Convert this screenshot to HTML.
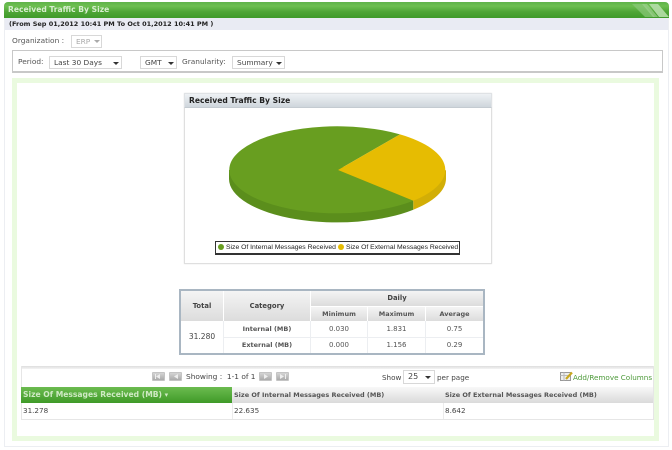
<!DOCTYPE html>
<html>
<head>
<meta charset="utf-8">
<style>
html,body{margin:0;padding:0;background:#fff;}
#p{position:relative;width:672px;height:450px;overflow:hidden;background:#fff;font-family:"DejaVu Sans","Liberation Sans",sans-serif;color:#444;filter:blur(.3px);}
#p div{position:absolute;box-sizing:border-box;}
.t{white-space:nowrap;line-height:12px;}
.c{text-align:center;}
.sel{background:#fff;border:1px solid #d8d8d8;height:13px;font-size:7.4px;line-height:11px;padding-left:4px;color:#444;white-space:nowrap;}
.arr{width:0;height:0;border-left:3px solid transparent;border-right:3px solid transparent;border-top:3px solid #333;}
.btn{width:13px;height:9px;background:linear-gradient(#d4d4d4,#aaa);border:1px solid #c4c4c4;border-radius:1px;}
.b{font-weight:bold;}
.th{background:linear-gradient(#f4f4f4,#dcdcdc);}
</style>
</head>
<body>
<div id="p">
  <!-- outer panel -->
  <div style="left:4px;top:17px;width:665px;height:430px;border:1px solid #eceef2;border-top:0;"></div>
  <!-- header -->
  <div style="left:4px;top:2px;width:665px;height:16px;border-radius:4px 4px 0 0;background:linear-gradient(#5fb24a 0%,#6dbf50 25%,#4fa637 60%,#3f9a2a 100%);overflow:hidden;">
    <svg width="665" height="16" style="position:absolute;left:0;top:0">
      <polygon points="628,2 640,2 651,15 641,15" fill="#8cc97a" opacity=".7"/>
      <polygon points="638,2 643,2 654,15 649,15" fill="#9ed28e" opacity=".7"/>
      <polygon points="645,2 654,2 665,15 655,15" fill="#b5dea8" opacity=".9"/>
    </svg>
  </div>
  <div class="t b" style="left:8px;top:4px;font-size:7.6px;color:#d8eed0;">Received Traffic By Size</div>
  <!-- sub bar -->
  <div style="left:5px;top:18px;width:663px;height:12px;background:#e9ebf3;"></div>
  <div class="t b" style="left:9px;top:18px;font-size:6.5px;color:#222;">(From Sep 01,2012 10:41 PM To Oct 01,2012 10:41 PM )</div>

  <!-- organization -->
  <div class="t" style="left:12px;top:35px;font-size:7.4px;color:#555;">Organization :</div>
  <div class="sel" style="left:71px;top:35px;width:31px;color:#aaa;">ERP</div>
  <div class="arr" style="left:94px;top:40px;border-top-color:#aaa;"></div>

  <!-- period box -->
  <div style="left:12px;top:50px;width:651px;height:23px;border:1px solid #c8c8c8;border-bottom-width:2px;"></div>
  <div class="t" style="left:18px;top:56px;font-size:7.4px;color:#555;">Period:</div>
  <div class="sel" style="left:49px;top:56px;width:73px;">Last 30 Days</div>
  <div class="arr" style="left:113px;top:62px;"></div>
  <div class="sel" style="left:140px;top:56px;width:37px;">GMT</div>
  <div class="arr" style="left:168px;top:62px;"></div>
  <div class="t" style="left:182px;top:56px;font-size:7.4px;color:#555;">Granularity:</div>
  <div class="sel" style="left:232px;top:56px;width:53px;">Summary</div>
  <div class="arr" style="left:276px;top:62px;"></div>

  <!-- green panel -->
  <div style="left:12px;top:78px;width:647px;height:363px;border:5px solid #eafadf;background:#fff;"></div>

  <!-- chart panel -->
  <div style="left:184px;top:93px;width:308px;height:171px;border:1px solid #dfdfdf;background:#fff;box-shadow:0 0 1px #ddd;"></div>
  <div style="left:184px;top:93px;width:308px;height:15px;background:linear-gradient(#eef1f4,#cfd6dc);border:1px solid #dfe2e5;border-bottom:1px solid #c4cbd1;"></div>
  <div class="t b" style="left:189px;top:95px;font-size:7.6px;color:#222;">Received Traffic By Size</div>
  <svg width="672" height="450" style="position:absolute;left:0;top:0">
    <path d="M229,170 L229,179 A108,43.5 0 0 0 413.3,209.7 L413.3,190 L338,165 Z" fill="#5b8e1c"/>
    <path d="M413.3,190 L413.3,209.7 A108,43.5 0 0 0 446,179 L446,170 Z" fill="#d2ae06"/>
    <path d="M338,170 L400,134.4 A108,43.5 0 1 0 413.3,200.7 Z" fill="#689e20"/>
    <path d="M338,170 L400,134.4 A108,43.5 0 0 1 413.3,200.7 Z" fill="#e6bc02"/>
  </svg>
  <!-- legend -->
  <div style="left:215px;top:241px;width:245px;height:14px;border:1px solid #333;border-bottom-width:2px;background:#fff;"></div>
  <div style="left:218px;top:244px;width:6px;height:6px;border-radius:50%;background:#689e20;"></div>
  <div class="t" style="left:226px;top:242px;font-family:'Liberation Sans',sans-serif;font-size:6.8px;color:#222;">Size Of Internal Messages Received</div>
  <div style="left:338px;top:244px;width:6px;height:6px;border-radius:50%;background:#e6bc02;"></div>
  <div class="t" style="left:346px;top:242px;font-family:'Liberation Sans',sans-serif;font-size:6.8px;color:#222;">Size Of External Messages Received</div>

  <!-- summary table -->
  <div style="left:179px;top:289px;width:306px;height:66px;border:2px solid #a9b6c2;background:#fff;"></div>
  <div class="th" style="left:181px;top:291px;width:42px;height:30px;"></div>
  <div class="th" style="left:224px;top:291px;width:86px;height:30px;"></div>
  <div class="th" style="left:311px;top:291px;width:172px;height:15px;"></div>
  <div class="th" style="left:311px;top:307px;width:56px;height:14px;"></div>
  <div class="th" style="left:368px;top:307px;width:57px;height:14px;"></div>
  <div class="th" style="left:426px;top:307px;width:57px;height:14px;"></div>
  <div style="left:223px;top:321px;width:1px;height:32px;background:#eceef1;"></div>
  <div style="left:310px;top:321px;width:1px;height:32px;background:#eceef1;"></div>
  <div style="left:367px;top:321px;width:1px;height:32px;background:#eceef1;"></div>
  <div style="left:425px;top:321px;width:1px;height:32px;background:#eceef1;"></div>
  <div style="left:224px;top:337px;width:259px;height:1px;background:#eceef1;"></div>
  <div class="t b c" style="left:181px;top:300px;width:42px;font-size:6.8px;color:#444;">Total</div>
  <div class="t b c" style="left:224px;top:300px;width:86px;font-size:6.8px;color:#444;">Category</div>
  <div class="t b c" style="left:311px;top:292px;width:172px;font-size:6.8px;color:#444;">Daily</div>
  <div class="t b c" style="left:311px;top:308px;width:56px;font-size:6.5px;color:#555;">Minimum</div>
  <div class="t b c" style="left:368px;top:308px;width:57px;font-size:6.5px;color:#555;">Maximum</div>
  <div class="t b c" style="left:426px;top:308px;width:57px;font-size:6.5px;color:#555;">Average</div>
  <div class="t c" style="left:181px;top:331px;width:42px;font-size:7.5px;color:#444;">31.280</div>
  <div class="t b c" style="left:224px;top:323px;width:86px;font-size:6.5px;color:#555;">Internal (MB)</div>
  <div class="t b c" style="left:224px;top:339px;width:86px;font-size:6.5px;color:#555;">External (MB)</div>
  <div class="t c" style="left:311px;top:323px;width:56px;font-size:7px;color:#555;">0.030</div>
  <div class="t c" style="left:368px;top:323px;width:57px;font-size:7px;color:#555;">1.831</div>
  <div class="t c" style="left:426px;top:323px;width:57px;font-size:7px;color:#555;">0.75</div>
  <div class="t c" style="left:311px;top:339px;width:56px;font-size:7px;color:#555;">0.000</div>
  <div class="t c" style="left:368px;top:339px;width:57px;font-size:7px;color:#555;">1.156</div>
  <div class="t c" style="left:426px;top:339px;width:57px;font-size:7px;color:#555;">0.29</div>

  <!-- grid toolbar -->
  <div style="left:21px;top:366px;width:633px;height:3px;background:linear-gradient(#ddd,#f4f4f4);"></div>
  <div style="left:21px;top:366px;width:633px;height:54px;border:1px solid #e6e6e6;border-top:0;"></div>
  <div class="btn" style="left:152px;top:372px;"></div>
  <div class="btn" style="left:169px;top:372px;"></div>
  <div class="btn" style="left:259px;top:372px;"></div>
  <div class="btn" style="left:276px;top:372px;"></div>
  <svg width="672" height="450" style="position:absolute;left:0;top:0">
    <path d="M160,374 L156,376.5 L160,379 Z M155,374 H156 V379 H155 Z" fill="#eee"/>
    <path d="M178,374 L174,376.5 L178,379 Z" fill="#eee"/>
    <path d="M264,374 L268,376.5 L264,379 Z" fill="#eee"/>
    <path d="M280,374 L284,376.5 L280,379 Z M285,374 H286 V379 H285 Z" fill="#eee"/>
  </svg>
  <div class="t" style="left:186px;top:371px;font-size:7.4px;color:#444;">Showing :&nbsp; 1-1 of 1</div>
  <div class="t" style="left:382px;top:372px;font-size:7.2px;color:#444;">Show</div>
  <div class="sel" style="left:403px;top:370px;width:32px;height:14px;font-size:8px;">25</div>
  <div class="arr" style="left:425px;top:376px;"></div>
  <div class="t" style="left:437px;top:372px;font-size:7.2px;color:#444;">per page</div>
  <svg width="14" height="11" style="position:absolute;left:560px;top:371px">
    <rect x="0.5" y="1.5" width="10" height="8" fill="#eee" stroke="#999"/>
    <path d="M0.5,4.5 H10.5 M4,1.5 V9.5" stroke="#bbb" fill="none"/>
    <path d="M6,8 L12,1.5" stroke="#c9a81c" stroke-width="2.2" fill="none"/>
  </svg>
  <div class="t" style="left:573px;top:372px;font-size:7.2px;color:#4d9a3a;">Add/Remove Columns</div>

  <!-- grid header -->
  <div class="th" style="left:232px;top:387px;width:421px;height:16px;background:linear-gradient(#f8f8f8,#dadada);"></div>
  <div style="left:21px;top:387px;width:211px;height:16px;background:linear-gradient(#6cbb50,#3f9a28);"></div>
  <div class="t b" style="left:23px;top:389px;font-size:7.6px;color:#cfeac4;">Size Of Messages Received (MB) <span style="font-size:7px;">&#9662;</span></div>
  <div class="t b" style="left:234px;top:389px;font-size:6.5px;color:#555;">Size Of Internal Messages Received (MB)</div>
  <div class="t b" style="left:445px;top:389px;font-size:6.5px;color:#555;">Size Of External Messages Received (MB)</div>
  <div style="left:232px;top:403px;width:1px;height:16px;background:#ececec;"></div>
  <div style="left:443px;top:403px;width:1px;height:16px;background:#ececec;"></div>
  <div class="t" style="left:23px;top:405px;font-size:7.2px;color:#444;">31.278</div>
  <div class="t" style="left:234px;top:405px;font-size:7.2px;color:#444;">22.635</div>
  <div class="t" style="left:445px;top:405px;font-size:7.2px;color:#444;">8.642</div>
</div>
</body>
</html>
